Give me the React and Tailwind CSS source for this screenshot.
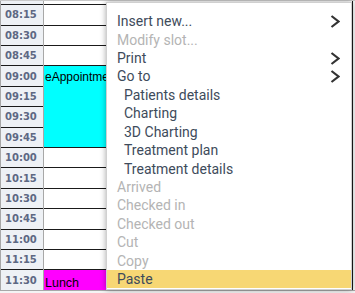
import React from "react";

const times = ["08:15","08:30","08:45","09:00","09:15","09:30","09:45","10:00","10:15","10:30","10:45","11:00","11:15","11:30"];

const items = [
  { t: "Insert new...", arrow: true },
  { t: "Modify slot...", dis: true },
  { t: "Print", arrow: true },
  { t: "Go to", arrow: true },
  { t: "Patients details", sub: true },
  { t: "Charting", sub: true },
  { t: "3D Charting", sub: true },
  { t: "Treatment plan", sub: true },
  { t: "Treatment details", sub: true },
  { t: "Arrived", dis: true },
  { t: "Checked in", dis: true },
  { t: "Checked out", dis: true },
  { t: "Cut", dis: true },
  { t: "Copy", dis: true },
  { t: "Paste", hl: true },
];

function Chevron() {
  return (
    <svg width="10" height="13" viewBox="0 0 10 13" className="shrink-0">
      <polyline points="1.5,1 8.5,6.5 1.5,12" fill="none" stroke="#333" strokeWidth="2.2" />
    </svg>
  );
}

export default function App() {
  const line = "border-t border-[#1a1a1a]";
  return (
    <div className="relative w-[355px] h-[293px] overflow-hidden bg-[#f4f4f4]">
      <div className="flex flex-col h-full border-t border-[#c9c9c9]">
        <div className="flex h-[3.3px]">
          <div className="w-[44px] bg-[#eef1f5] border-l border-[#a8a8a8] border-r border-[#1a1a1a]" />
          <div className="w-[309px] bg-white border-r border-[#1a1a1a]" />
        </div>
        <div className="flex">
          <div className="w-[44px] flex flex-col bg-[#eef1f5] border-l border-[#a8a8a8] border-r border-[#1a1a1a]">
            {times.map((t) => (
              <div
                key={t}
                className={`h-[20.4px] ${line} flex items-center pl-[4px] text-[10px] font-bold text-[#5d6883]`}
                style={{ fontFamily: '"DejaVu Sans", Verdana, sans-serif' }}
              >
                {t}
              </div>
            ))}
          </div>
          <div
            className="w-[309px] flex flex-col bg-white border-r border-[#1a1a1a] text-[12px] text-black"
            style={{ fontFamily: '"Liberation Sans", Arial, sans-serif' }}
          >
            <div className={`h-[20.4px] ${line}`} />
            <div className={`h-[20.4px] ${line}`} />
            <div className={`h-[20.4px] ${line}`} />
            <div className={`h-[81.6px] ${line} bg-[#00ffff] pl-[1px] pt-[4px] leading-[14px] whitespace-nowrap`}>
              eAppointment
            </div>
            <div className={`h-[20.4px] ${line}`} />
            <div className={`h-[20.4px] ${line}`} />
            <div className={`h-[20.4px] ${line}`} />
            <div className={`h-[20.4px] ${line}`} />
            <div className={`h-[20.4px] ${line}`} />
            <div className={`h-[20.4px] ${line}`} />
            <div className={`h-[20.4px] ${line} bg-[#ff00ff] pl-[1px] flex items-end leading-[14px] text-[12.5px]`}>
              Lunch
            </div>
          </div>
        </div>
        <div className="flex-1 border-t border-[#a8a8a8] bg-[#f4f4f4]" />
      </div>

      <div
        className="absolute left-[106px] top-[2px] w-[246px] h-[288px] bg-white border border-[#d0d0d0] shadow-[0_0_6px_rgba(0,0,0,0.35)] pt-[9px]"
        style={{ fontFamily: 'Roboto, "Noto Sans", sans-serif' }}
      >
        {items.map((it) => (
          <div
            key={it.t}
            className={`h-[18.43px] flex items-center justify-between text-[14px] leading-[16px] pr-[11px] ${
              it.sub ? "pl-[17px]" : "pl-[10px]"
            } ${it.dis ? "text-[#b4b4b4]" : "text-[#3e4b5b]"} ${it.hl ? "bg-[#f7d774]" : ""}`}
          >
            <span className="whitespace-nowrap">{it.t}</span>
            {it.arrow ? <Chevron /> : null}
          </div>
        ))}
      </div>
    </div>
  );
}
